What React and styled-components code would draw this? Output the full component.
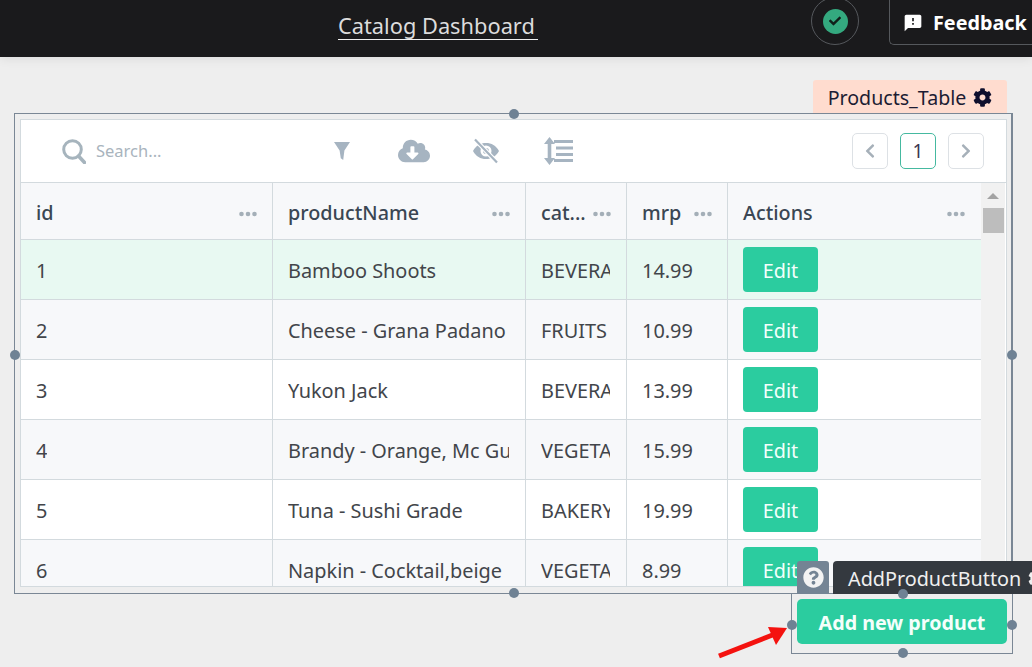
import React from "react";
import styled, { createGlobalStyle } from "styled-components";
import { FaCog, FaQuestionCircle, FaCloudDownloadAlt, FaChevronLeft, FaChevronRight, FaCheck } from "react-icons/fa";
import { MdFeedback } from "react-icons/md";

const products = [
  { id: 1, name: "Bamboo Shoots", category: "BEVERAGES", mrp: "14.99" },
  { id: 2, name: "Cheese - Grana Padano", category: "FRUITS", mrp: "10.99" },
  { id: 3, name: "Yukon Jack", category: "BEVERAGES", mrp: "13.99" },
  { id: 4, name: "Brandy - Orange, Mc Guiness", category: "VEGETABLES", mrp: "15.99" },
  { id: 5, name: "Tuna - Sushi Grade", category: "BAKERY", mrp: "19.99" },
  { id: 6, name: "Napkin - Cocktail,beige", category: "VEGETABLES", mrp: "8.99" },
];

const columns = ["id", "productName", "cat...", "mrp", "Actions"];

const GlobalStyle = createGlobalStyle`
  html, body {
    margin: 0;
    height: 100%;
    overflow: hidden;
    background: #eeeeee;
    font-family: "Noto Sans", "Open Sans", sans-serif;
  }
  * { box-sizing: border-box; }
`;

const Page = styled.div`
  width: 1032px;
  height: 667px;
  overflow: hidden;
  position: relative;
`;

const Header = styled.header`
  height: 57px;
  background: #1a1a1c;
  display: flex;
  align-items: flex-start;
  padding-left: 338px;
  overflow: hidden;
  box-shadow: 0 2px 10px rgba(0, 0, 0, 0.08);
  position: relative;
`;

const Title = styled.a`
  display: block;
  width: 200px;
  margin-top: 12px;
  font-size: 21.8px;
  line-height: 28px;
  height: 28px;
  overflow: hidden;
  color: #dcdcdc;
  border-bottom: 1px solid #f0f0f0;
  white-space: nowrap;
`;

const StatusRing = styled.div`
  margin-left: auto;
  margin-top: -3px;
  width: 48px;
  height: 48px;
  border-radius: 50%;
  border: 1px solid #55585c;
  display: flex;
  align-items: center;
  justify-content: center;
  flex-shrink: 0;
`;

const StatusDot = styled.div`
  width: 25px;
  height: 25px;
  border-radius: 50%;
  background: #34a97f;
  color: #10201a;
  display: flex;
  align-items: center;
  justify-content: center;
  font-size: 12px;
`;

const FeedbackButton = styled.div`
  margin-left: 30px;
  margin-top: -6px;
  width: 143px;
  height: 51px;
  flex-shrink: 0;
  border: 1px solid #55585c;
  border-right: none;
  border-radius: 0 0 0 5px;
  padding: 6px 0 0 13px;
  display: flex;
  align-items: center;
  gap: 10px;
  color: #ffffff;
  font-size: 19.8px;
  font-weight: 700;
  svg { font-size: 20px; }
`;

const Main = styled.main`
  padding: 23px 0 0 14px;
  display: flex;
  flex-direction: column;
`;

const WidgetTag = styled.div`
  align-self: flex-start;
  margin-left: 799px;
  width: 194px;
  height: 33px;
  padding-top: 1px;
  background: #ffdccf;
  border-radius: 3px 3px 0 0;
  display: flex;
  align-items: center;
  justify-content: center;
  gap: 7px;
  font-size: 19.6px;
  color: #1c1c33;
  svg { font-size: 19px; color: #0f0f2d; }
`;

const WidgetFrame = styled.section`
  position: relative;
  width: 999px;
  height: 481px;
  border: 1px solid #7a8795;
  box-shadow: inset -1px 0 0 #7a8795;
  padding: 5px 5px 6px 5px;
`;

const Handle = styled.span`
  position: absolute;
  width: 10px;
  height: 10px;
  border-radius: 50%;
  background: #6f8294;
  z-index: 3;
  ${(p) => p.$side === "top" && "top: -5px; left: calc(50% - 4.5px);"}
  ${(p) => p.$side === "bottom" && "bottom: -5px; left: calc(50% - 4.5px);"}
  ${(p) => p.$side === "left" && "left: -5px; top: calc(50% - 4px);"}
  ${(p) => p.$side === "right" && "right: -5px; top: calc(50% - 4px);"}
`;

const TableBox = styled.div`
  height: 100%;
  background: #ffffff;
  border: 1px solid #d3dade;
  display: flex;
  flex-direction: column;
  overflow: hidden;
`;

const Toolbar = styled.div`
  height: 63px;
  flex-shrink: 0;
  display: flex;
  align-items: center;
  padding: 0 22px 0 41px;
  border-bottom: 1px solid #d3dade;
`;

const SearchGroup = styled.div`
  width: 266px;
  display: flex;
  align-items: center;
  gap: 10px;
  color: #a9b4bd;
  font-size: 16.5px;
  line-height: 22px;
`;

const ToolIcons = styled.div`
  display: flex;
  align-items: center;
  gap: 44px;
  color: #a6b4c1;
`;

const ToolIcon = styled.span`
  width: 28px;
  height: 28px;
  display: flex;
  align-items: center;
  justify-content: center;
  font-size: 32px;
  flex-shrink: 0;
  svg { flex-shrink: 0; }
`;

const Pager = styled.div`
  margin-left: auto;
  display: flex;
  gap: 12px;
`;

const PageButton = styled.div`
  width: 36px;
  height: 36px;
  border-radius: 5px;
  border: 1px solid ${(p) => (p.$active ? "#45b9a0" : "#dde1e5")};
  color: ${(p) => (p.$active ? "#3c3650" : "#a6b0b9")};
  display: flex;
  align-items: center;
  justify-content: center;
  font-size: ${(p) => (p.$active ? "19px" : "16px")};
`;

const TableBody = styled.div`
  flex: 1;
  min-height: 0;
  display: flex;
`;

const Rows = styled.div`
  width: 960px;
  flex-shrink: 0;
  overflow: hidden;
`;

const Grid = styled.div`
  display: grid;
  grid-template-columns: 252px 253px 101px 101px 253px;
  height: ${(p) => p.$height}px;
  background: ${(p) => p.$bg};
  border-bottom: 1px solid #d3dade;
`;

const HeadCell = styled.div`
  display: flex;
  align-items: center;
  justify-content: space-between;
  padding: 2px 15px 0 15px;
  font-size: 19.8px;
  font-weight: 500;
  color: #3a4653;
  border-right: 1px solid #d3dade;
  white-space: nowrap;
  &:last-child { border-right: none; padding-right: 16px; }
  svg { margin-top: 4px; flex-shrink: 0; }
`;

const Cell = styled.div`
  display: flex;
  align-items: center;
  padding: 2px 16px 0 15px;
  font-size: 19.9px;
  color: #42454a;
  border-right: 1px solid #d3dade;
  &:last-child { border-right: none; padding-top: 0; }
`;

const CellText = styled.span`
  display: block;
  overflow: hidden;
  white-space: nowrap;
`;

const EditButton = styled.button`
  width: 75px;
  height: 45px;
  border: none;
  border-radius: 4px;
  background: #2bcc9f;
  color: #f2fffb;
  font-family: inherit;
  font-size: 19.8px;
  padding: 2px 0 0;
`;

const Scrollbar = styled.div`
  width: 24px;
  flex-shrink: 0;
  background: #f1f1f1;
  display: flex;
  flex-direction: column;
  align-items: center;
  padding-top: 10px;
`;

const ScrollArrow = styled.div`
  width: 0;
  height: 0;
  border-left: 6px solid transparent;
  border-right: 6px solid transparent;
  border-bottom: 6px solid #a3a3a3;
`;

const ScrollThumb = styled.div`
  margin-top: 9px;
  width: 21px;
  height: 25px;
  background: #bdbdbd;
`;

const ButtonFrame = styled.section`
  position: relative;
  align-self: flex-start;
  margin: -1px 0 0 777px;
  width: 222px;
  height: 61px;
  border: 1px solid #7a8795;
  padding: 5px;
`;

const AddButton = styled.button`
  width: 210px;
  height: 45px;
  border: none;
  border-radius: 5px;
  background: #2bcc9f;
  color: #f4fffb;
  font-family: inherit;
  font-size: 19.7px;
  font-weight: 700;
  padding: 1px 0 0;
`;

const HelpTag = styled.div`
  position: absolute;
  left: 5px;
  top: -33px;
  width: 32px;
  height: 33px;
  background: #748494;
  border-radius: 3px 3px 0 0;
  color: #f3f3f3;
  display: flex;
  align-items: center;
  justify-content: center;
  font-size: 21px;
  z-index: 2;
`;

const NameTag = styled.div`
  position: absolute;
  left: 41px;
  top: -33px;
  width: 210px;
  height: 33px;
  background: #34393f;
  border-radius: 4px 4px 0 0;
  color: #f0f0f0;
  display: flex;
  align-items: center;
  gap: 7px;
  padding: 1px 0 0 15px;
  font-size: 19.8px;
  white-space: nowrap;
  z-index: 2;
  svg { flex-shrink: 0; font-size: 19px; }
`;

const ArrowMark = styled.svg`
  position: absolute;
  left: 715px;
  top: 622px;
  z-index: 4;
`;

const Dots = () => (
  <svg width="18" height="6" viewBox="0 0 18 6" fill="#a4afb8">
    <circle cx="2.500" cy="3" r="2.300" />
    <circle cx="9" cy="3" r="2.300" />
    <circle cx="15.500" cy="3" r="2.300" />
  </svg>
);

const SearchIcon = () => (
  <svg width="24" height="25" viewBox="0 0 24 25" fill="none" stroke="#a6b4bd" strokeWidth="3">
    <circle cx="10.500" cy="10.500" r="8.800" />
    <path d="M16.500 17l6 6.500" strokeWidth="3.600" strokeLinecap="round" />
  </svg>
);

const FilterIcon = () => (
  <svg width="18" height="20" viewBox="0 0 18 20" fill="currentColor">
    <path d="M1 1h16l-5.600 8.600-1.200 9.400-2.400-1.800-1.200-7.600z" />
  </svg>
);

const EyeOffIcon = () => (
  <svg width="28" height="26" viewBox="0 0 28 26" fill="none">
    <path
      fillRule="evenodd"
      fill="currentColor"
      d="M1 13C4 7.500 8.500 5 14 5s10 2.500 13 8c-3 5.500-7.500 8-13 8S4 18.500 1 13zm13-5.500a5.500 5.500 0 1 0 0 11 5.500 5.500 0 0 0 0-11z"
    />
    <circle cx="14" cy="13" r="3" fill="currentColor" />
    <path d="M3 1.500L25 24.500" stroke="#ffffff" strokeWidth="4.500" />
    <path d="M3 1.500L25 24.500" stroke="currentColor" strokeWidth="2.200" />
  </svg>
);

const LineHeightIcon = () => (
  <svg width="30" height="28" viewBox="0 0 30 28" fill="currentColor">
    <path d="M6.500 0l5.500 7H8.300v14H12l-5.500 7L1 21h3.700V7H1z" />
    <rect x="11" y="3" width="19" height="3" />
    <rect x="13" y="9.500" width="17" height="3" />
    <rect x="13" y="16" width="17" height="3" />
    <rect x="11" y="22" width="19" height="3" />
  </svg>
);

const rowBackground = (index) => {
  if (index === 0) return "#e8f9f2";
  return index % 2 === 1 ? "#f7f8fa" : "#ffffff";
};

export default function App() {
  return (
    <Page>
      <GlobalStyle />
      <Header>
        <Title>Catalog Dashboard</Title>
        <StatusRing>
          <StatusDot><FaCheck /></StatusDot>
        </StatusRing>
        <FeedbackButton>
          <MdFeedback />
          Feedback
        </FeedbackButton>
      </Header>
      <Main>
        <WidgetTag>
          Products_Table <FaCog />
        </WidgetTag>
        <WidgetFrame>
          <Handle $side="top" />
          <Handle $side="bottom" />
          <Handle $side="left" />
          <Handle $side="right" />
          <TableBox>
            <Toolbar>
              <SearchGroup>
                <SearchIcon />
                Search...
              </SearchGroup>
              <ToolIcons>
                <ToolIcon><FilterIcon /></ToolIcon>
                <ToolIcon><FaCloudDownloadAlt /></ToolIcon>
                <ToolIcon><EyeOffIcon /></ToolIcon>
                <ToolIcon><LineHeightIcon /></ToolIcon>
              </ToolIcons>
              <Pager>
                <PageButton><FaChevronLeft /></PageButton>
                <PageButton $active>1</PageButton>
                <PageButton><FaChevronRight /></PageButton>
              </Pager>
            </Toolbar>
            <TableBody>
              <Rows>
                <Grid $height={57} $bg="#f7f8fa">
                  {columns.map((name) => (
                    <HeadCell key={name}>
                      {name}
                      <Dots />
                    </HeadCell>
                  ))}
                </Grid>
                {products.map((item, index) => (
                  <Grid key={item.id} $height={60} $bg={rowBackground(index)}>
                    <Cell><CellText>{item.id}</CellText></Cell>
                    <Cell><CellText>{item.name}</CellText></Cell>
                    <Cell><CellText>{item.category}</CellText></Cell>
                    <Cell><CellText>{item.mrp}</CellText></Cell>
                    <Cell><EditButton>Edit</EditButton></Cell>
                  </Grid>
                ))}
              </Rows>
              <Scrollbar>
                <ScrollArrow />
                <ScrollThumb />
              </Scrollbar>
            </TableBody>
          </TableBox>
        </WidgetFrame>
        <ButtonFrame>
          <Handle $side="top" />
          <Handle $side="bottom" />
          <Handle $side="left" />
          <Handle $side="right" />
          <HelpTag><FaQuestionCircle /></HelpTag>
          <NameTag>
            AddProductButton <FaCog />
          </NameTag>
          <AddButton>Add new product</AddButton>
        </ButtonFrame>
      </Main>
      <ArrowMark width="76" height="40" viewBox="0 0 76 40">
        <path d="M4 34L60 12" stroke="#f4120f" strokeWidth="5" />
        <path d="M72 6L53 5l8 18z" fill="#f4120f" />
      </ArrowMark>
    </Page>
  );
}
